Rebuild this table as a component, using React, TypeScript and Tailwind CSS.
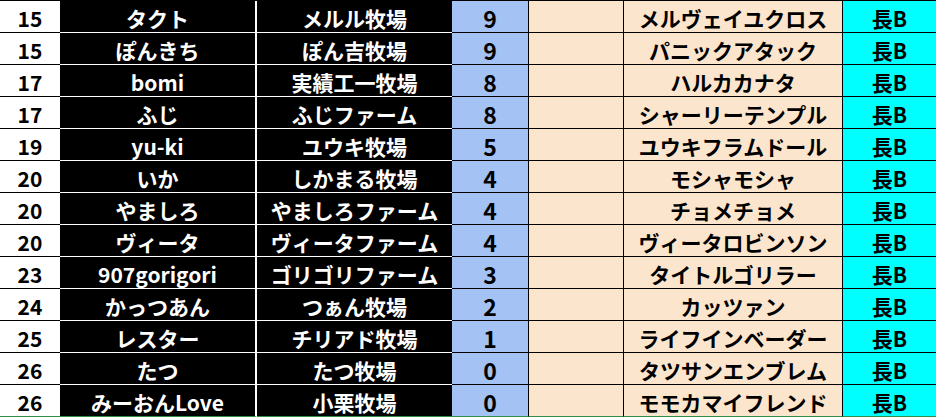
import React from "react";

type Row = [string, string, string, string, string];

const rows: Row[] = [
  ["15", "タクト", "メルル牧場", "9", "メルヴェイユクロス"],
  ["15", "ぽんきち", "ぽん吉牧場", "9", "パニックアタック"],
  ["17", "bomi", "実績工一牧場", "8", "ハルカカナタ"],
  ["17", "ふじ", "ふじファーム", "8", "シャーリーテンプル"],
  ["19", "yu-ki", "ユウキ牧場", "5", "ユウキフラムドール"],
  ["20", "いか", "しかまる牧場", "4", "モシャモシャ"],
  ["20", "やましろ", "やましろファーム", "4", "チョメチョメ"],
  ["20", "ヴィータ", "ヴィータファーム", "4", "ヴィータロビンソン"],
  ["23", "907gorigori", "ゴリゴリファーム", "3", "タイトルゴリラー"],
  ["24", "かっつあん", "つぁん牧場", "2", "カッツァン"],
  ["25", "レスター", "チリアド牧場", "1", "ライフインベーダー"],
  ["26", "たつ", "たつ牧場", "0", "タツサンエンブレム"],
  ["26", "みーおんLove", "小栗牧場", "0", "モモカマイフレンド"],
];

export default function App() {
  return (
    <div
      className="w-[936px] h-[417px] bg-white border-t border-black overflow-hidden font-bold text-[21px]"
      style={{ fontFamily: '"Noto Sans CJK JP", "Noto Sans", sans-serif' }}
    >
      {rows.map((r, i) => {
        const last = i === rows.length - 1;
        const bb = last ? "border-[#2f8f46]" : "border-black";
        const bw = last ? "border-[#2f8f46]" : "border-white";
        return (
          <div key={i} className="flex h-[32px] leading-none">
            <div className={`w-[60px] flex items-center justify-center pt-[3px] bg-white text-black border-b ${bb}`}>
              {r[0]}
            </div>
            <div className={`w-[197px] flex items-center justify-center pt-[3px] bg-black text-white border-b border-r-2 ${bw} border-r-white`}>
              {r[1]}
            </div>
            <div className={`w-[195px] flex items-center justify-center pt-[3px] bg-black text-white border-b ${bw}`}>
              {r[2]}
            </div>
            <div className={`w-[77px] flex items-center justify-center pt-[3px] text-[23px] bg-[#a4c2f4] text-black border-b border-r ${bb} border-r-black`}>
              {r[3]}
            </div>
            <div className={`w-[95px] bg-[#fce5cd] border-b border-r ${bb} border-r-black`} />
            <div className={`w-[219px] flex items-center justify-center pt-[3px] bg-[#fce5cd] text-black border-b border-r ${bb} border-r-black`}>
              {r[4]}
            </div>
            <div className={`w-[93px] flex items-center justify-center pt-[3px] bg-[#00ffff] text-black border-b ${bb}`}>
              長B
            </div>
          </div>
        );
      })}
    </div>
  );
}
